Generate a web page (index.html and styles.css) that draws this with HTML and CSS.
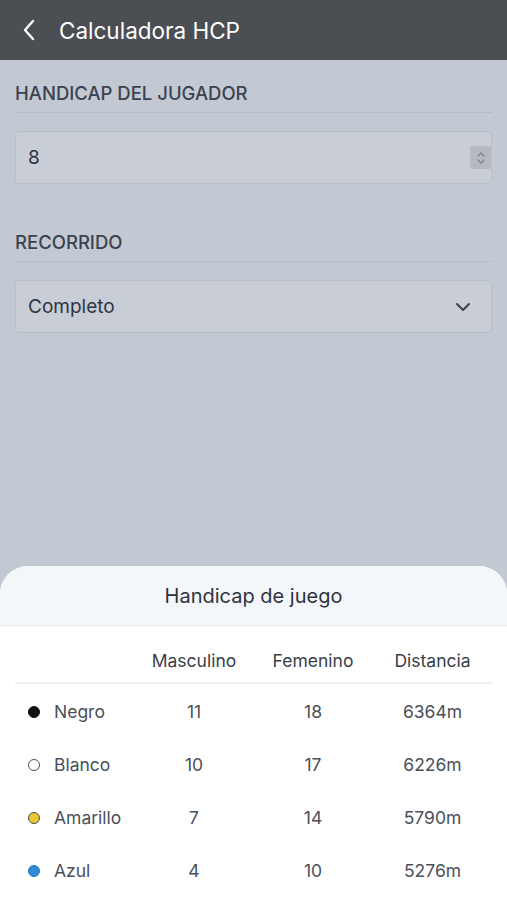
FILE: index.html
```html
<!DOCTYPE html>
<html lang="es">
<head>
<meta charset="utf-8">
<title>Calculadora HCP</title>
<link rel="stylesheet" href="styles.css">
</head>
<body>
<div class="app">
  <header class="topbar">
    <svg class="back" width="14" height="22" viewBox="0 0 14 22"><path d="M11 2 L3 11 L11 20" fill="none" stroke="#fff" stroke-width="2.4" stroke-linecap="round" stroke-linejoin="round"/></svg>
    <h1 class="title">Calculadora HCP</h1>
  </header>
  <main class="content">
    <section class="field">
      <div class="label">HANDICAP DEL JUGADOR</div>
      <div class="box">
        <span class="value">8</span>
        <span class="spin">
          <svg width="10" height="16" viewBox="0 0 10 16"><path d="M2 6 L5 3 L8 6 M2 10 L5 13 L8 10" fill="none" stroke="#7f858e" stroke-width="1.3" stroke-linecap="round" stroke-linejoin="round"/></svg>
        </span>
      </div>
    </section>
    <section class="field">
      <div class="label">RECORRIDO</div>
      <div class="box">
        <span class="value">Completo</span>
        <svg class="chev" width="16" height="10" viewBox="0 0 16 10"><path d="M2 2 L8 8 L14 2" fill="none" stroke="#3b4250" stroke-width="2" stroke-linecap="round" stroke-linejoin="round"/></svg>
      </div>
    </section>
  </main>
  <section class="sheet">
    <div class="sheet-head">Handicap de juego</div>
    <div class="sheet-body">
      <div class="row head">
        <span class="name"></span>
        <span class="num">Masculino</span>
        <span class="num">Femenino</span>
        <span class="num">Distancia</span>
      </div>
      <div class="row">
        <span class="name"><i class="dot negro"></i>Negro</span>
        <span class="num">11</span><span class="num">18</span><span class="num">6364m</span>
      </div>
      <div class="row">
        <span class="name"><i class="dot blanco"></i>Blanco</span>
        <span class="num">10</span><span class="num">17</span><span class="num">6226m</span>
      </div>
      <div class="row">
        <span class="name"><i class="dot amarillo"></i>Amarillo</span>
        <span class="num">7</span><span class="num">14</span><span class="num">5790m</span>
      </div>
      <div class="row">
        <span class="name"><i class="dot azul"></i>Azul</span>
        <span class="num">4</span><span class="num">10</span><span class="num">5276m</span>
      </div>
    </div>
  </section>
</div>
</body>
</html>
```

FILE: styles.css
```css
* { box-sizing: border-box; }
html, body { margin: 0; padding: 0; }
body {
  font-family: Inter, "Noto Sans", sans-serif;
  background: #c3c9d2;
  width: 507px;
  height: 900px;
  overflow: hidden;
}
.app {
  height: 900px;
  display: flex;
  flex-direction: column;
}
.topbar {
  height: 60px;
  background: #4b4e52;
  display: flex;
  align-items: center;
  padding-left: 22px;
  flex-shrink: 0;
}
.back { margin-right: 23px; }
.title {
  margin: 0;
  color: #fff;
  font-size: 22.5px;
  font-weight: 400;
  letter-spacing: 0;
}
.content {
  flex: 1;
  padding: 0 15px;
}
.field { padding-top: 23px; }
.field + .field { padding-top: 48px; }
.label {
  font-size: 18.5px;
  font-weight: 500;
  color: #3b4250;
  padding-bottom: 8px;
  border-bottom: 1px solid #b5bcc6;
  line-height: 21px;
}
.box {
  margin-top: 18px;
  height: 53px;
  border: 1px solid #b9bfc8;
  border-radius: 4px;
  background: #c8cdd6;
  display: flex;
  align-items: center;
  justify-content: space-between;
  padding-left: 12px;
}
.value {
  font-size: 19px;
  color: #2f3542;
}
.spin {
  width: 21px;
  height: 23px;
  background: #b5bac2;
  border-radius: 2px;
  display: flex;
  align-items: center;
  justify-content: center;
}
.chev { margin-right: 20px; }
.sheet {
  height: 334px;
  flex-shrink: 0;
  background: #fff;
  border-radius: 28px 28px 0 0;
  overflow: hidden;
}
.sheet-head {
  height: 60px;
  background: #f4f7fa;
  border-bottom: 1px solid #e6e9ed;
  display: flex;
  align-items: center;
  justify-content: center;
  font-size: 20px;
  color: #2c3340;
}
.sheet-body { padding: 12px 15px 0; }
.row {
  display: grid;
  grid-template-columns: 120px 118px 120px 119px;
  align-items: center;
  height: 53px;
  font-size: 17.5px;
  color: #4a505a;
}
.row.head {
  height: 46px;
  color: #3a404a;
  border-bottom: 2px solid #eceef1;
  margin-bottom: 1px;
}
.name {
  display: flex;
  align-items: center;
  padding-left: 13px;
}
.num { text-align: center; }
.dot {
  width: 12px;
  height: 12px;
  border-radius: 50%;
  margin-right: 14px;
  border: 1.5px solid #4a4f57;
}
.negro { background: #0d0f14; border-color: #0d0f14; }
.blanco { background: #fff; }
.amarillo { background: #e8c832; }
.azul { background: #2f8bd6; border-color: #2a78b8; }
```
